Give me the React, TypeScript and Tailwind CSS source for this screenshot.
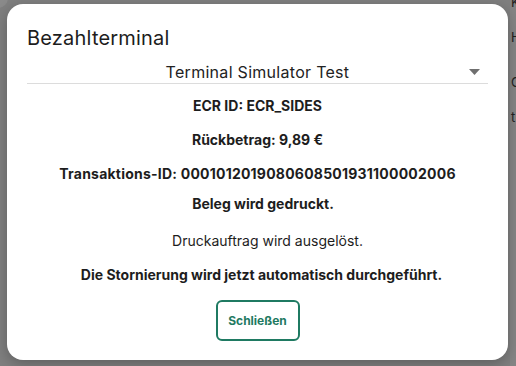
import React from 'react';

const lines = [
  { text: 'ECR ID: ECR_SIDES', cls: 'mt-[12px] font-bold' },
  { text: 'Rückbetrag: 9,89 €', cls: 'mt-[14px] font-bold' },
  { text: 'Transaktions-ID: 0001012019080608501931100002006', cls: 'mt-[14px] font-bold tracking-[0.016em]' },
  { text: 'Beleg wird gedruckt.', cls: 'mt-[10px] font-bold pl-[11px]' },
  { text: 'Druckauftrag wird ausgelöst.', cls: 'mt-[17px] font-normal pl-[20px]' },
  { text: 'Die Stornierung wird jetzt automatisch durchgeführt.', cls: 'mt-[14px] font-bold pl-[8px]' },
];

export default function App() {
  return (
    <div className="relative w-[516px] h-[366px] overflow-hidden bg-[#7f7f7f] font-['Inter','Liberation_Sans',sans-serif] text-[#1d1d1d]">
      {/* page behind the overlay, mostly hidden */}
      <div className="absolute right-0 top-0 h-full w-[6px] bg-[#858585] text-[13px] leading-none text-[#222] overflow-hidden">
        <div className="mt-[-4px] pl-[1px]">K</div>
        <div className="mt-[22px] pl-[1px]">H</div>
        <div className="mt-[32px] pl-[1px]">C</div>
        <div className="mt-[22px] pl-[1px]">t</div>
      </div>
      <div className="absolute left-[-12px] top-[-12px] w-[20px] h-[20px] rounded-full bg-[#8a8a8a]" />

      <div className="absolute left-[7px] top-[4px] w-[501px] h-[356px] rounded-[16px] bg-white shadow-[0_4px_14px_rgba(0,0,0,0.25)] px-5 pt-5 flex flex-col">
        <h2 className="text-[20px] leading-[28px] font-normal tracking-[0.01em]">Bezahlterminal</h2>

        <div className="mt-[10px] relative border-b border-[#dcdcdc] h-[22px]">
          <div className="text-center text-[16px] leading-[20px] text-[#222] tracking-[0.018em]">Terminal Simulator Test</div>
          <svg className="absolute right-[8px] top-[7px]" width="11" height="6" viewBox="0 0 11 6">
            <path d="M0 0 L11 0 L5.5 6 Z" fill="#6f6f6f" />
          </svg>
        </div>

        {lines.map((l) => (
          <p key={l.text} className={`text-center text-[14px] leading-[20px] ${l.cls}`}>
            {l.text}
          </p>
        ))}

        <div className="mt-[15px] flex justify-center">
          <button className="w-[84px] h-[41px] rounded-[6px] border-2 border-[#1f7a62] text-[#1f7a62] text-[12px] font-bold">
            Schließen
          </button>
        </div>
      </div>
    </div>
  );
}
